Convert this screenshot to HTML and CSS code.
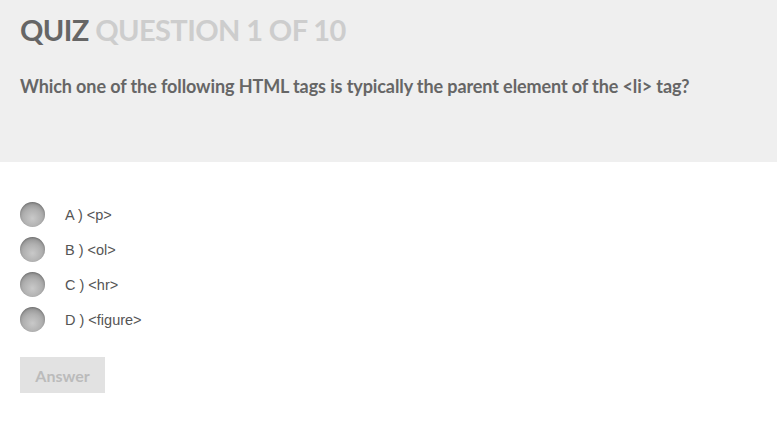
FILE: index.html
```html
<!DOCTYPE html>
<html>
<head>
<meta charset="utf-8">
<link rel="stylesheet" href="styles.css">
</head>
<body>
<header class="quiz-head">
  <h1 class="title"><span class="title-strong">QUIZ</span> <span class="title-light">QUESTION 1 OF 10</span></h1>
  <p class="question">Which one of the following HTML tags is typically the parent element of the &lt;li&gt; tag?</p>
</header>
<main class="quiz-body">
  <ul class="options">
    <li class="option"><span class="radio"></span><span class="label">A ) &lt;p&gt;</span></li>
    <li class="option"><span class="radio"></span><span class="label">B ) &lt;ol&gt;</span></li>
    <li class="option"><span class="radio"></span><span class="label">C ) &lt;hr&gt;</span></li>
    <li class="option"><span class="radio"></span><span class="label">D ) &lt;figure&gt;</span></li>
  </ul>
  <button class="answer-btn">Answer</button>
</main>
</body>
</html>
```
FILE: styles.css
```css
* { box-sizing: border-box; }
html, body { margin: 0; padding: 0; background: #fff; }
body { font-family: "Lato", "Open Sans", sans-serif; }

.quiz-head {
  background: #efefef;
  height: 162px;
  padding: 13px 20px 0;
}
.title {
  margin: 0;
  font-size: 29px;
  font-weight: 700;
  line-height: 34px;
  letter-spacing: -0.6px;
}
.title-strong { color: #666; }
.title-light { color: #cdcdcd; }

.question {
  margin: 28px 0 0;
  font-size: 18px;
  font-weight: 700;
  line-height: 22px;
  color: #666;
  letter-spacing: -0.1px;
}

.quiz-body { padding: 40px 20px 0; }
.options { list-style: none; margin: 0; padding: 0; display: flex; flex-direction: column; gap: 10px; }
.option { display: flex; align-items: center; height: 25px; gap: 20px; }
.radio {
  width: 25px; height: 25px; border-radius: 50%;
  background: radial-gradient(circle at 50% 65%, #c9c9c9 0%, #b0b0b0 45%, #8f8f8f 80%, #7a7a7a 100%);
  box-shadow: inset 0 1px 2px rgba(0,0,0,0.25);
  flex: none;
}
.label {
  font-family: "Liberation Sans", Arial, sans-serif;
  font-size: 14.5px;
  color: #555;
}

.answer-btn {
  margin-top: 25px;
  width: 85px; height: 36px;
  border: none;
  background: #e2e2e2;
  color: #bbb;
  font-family: "Lato", sans-serif;
  font-weight: 700;
  font-size: 16px;
  padding: 0;
}
```
